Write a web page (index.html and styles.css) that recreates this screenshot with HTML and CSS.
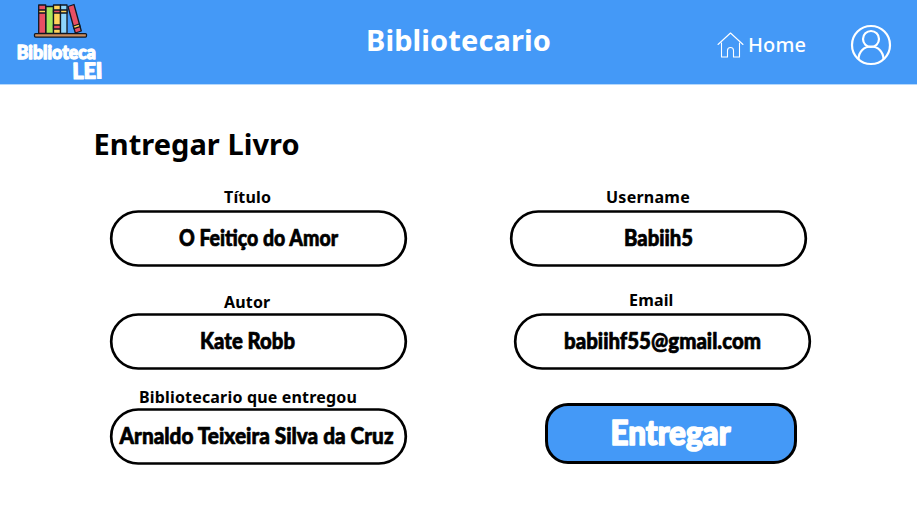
FILE: index.html
```html
<!DOCTYPE html>
<html lang="pt">
<head>
<meta charset="utf-8">
<title>Entregar Livro</title>
<link rel="stylesheet" href="styles.css">
</head>
<body>
<header class="topbar">
  <svg class="brand" viewBox="0 0 130 84" role="img" aria-label="Biblioteca LEI">
    <g stroke="#111722" stroke-width="1.3" stroke-linejoin="round">
      <rect x="38.7" y="5" width="7" height="28.5" fill="#e84f64"/>
      <path d="M38.7 10h7v3h-7z" fill="#ffd35b"/>
      <rect x="46" y="6.5" width="7.5" height="27" fill="#a5e65b"/>
      <rect x="53.5" y="5" width="7" height="28.5" fill="#ffd35b"/>
      <path d="M53.5 10h7v3h-7zM53.5 25h7v4h-7z" fill="#e84f64"/>
      <rect x="60.5" y="5" width="6.5" height="28.5" fill="#8ed5fb"/>
      <path d="M60.5 10h6.500v3h-6.500z" fill="#ffd35b"/>
      <path d="M68 6.500l6-2 7.300 26.500-6 2z" fill="#e84f64"/>
      <path d="M73.300 26l6-2 .7 2.700-6 2z" fill="#ffd35b"/>
      <rect x="34.500" y="33.600" width="52" height="3.500" rx="1" fill="#cc8d5b"/>
    </g>
    <text class="brand-word" x="16.800" y="58.700" font-size="19" textLength="79" lengthAdjust="spacingAndGlyphs">Biblioteca</text>
    <text class="brand-word" x="72.500" y="78.700" font-size="22" textLength="30" lengthAdjust="spacingAndGlyphs" transform="rotate(-1 87 78)">LEI</text>
  </svg>
  <h1 class="role">Bibliotecario</h1>
  <nav class="nav">
    <a class="home">
      <svg class="home-icon" viewBox="0 0 27 26"><path d="M1 12.500L13.500 1 26 12.500M4.500 11v14h6v-6.500q0-3 3-3t3 3V25h6V11"/></svg>
      <span class="home-label">Home</span>
    </a>
    <svg class="user-icon" viewBox="0 0 40 40"><circle cx="20" cy="20" r="19"/><circle cx="20" cy="14" r="8"/><path d="M7.500 34c.3-7.500 5.500-12.500 12.500-12.500S32.200 26.500 32.500 34"/></svg>
  </nav>
</header>
<main class="page">
  <h2 class="title">Entregar Livro</h2>
  <div class="columns">
    <section class="column">
      <div class="field">
        <span class="label titulo">Título</span>
        <svg class="pill" viewBox="0 0 297 57"><rect x="1.200" y="1.500" width="294.600" height="54" rx="27"/><text x="69" y="36" textLength="159" lengthAdjust="spacingAndGlyphs">O Feitiço do Amor</text></svg>
      </div>
      <div class="field autor-field">
        <span class="label autor">Autor</span>
        <svg class="pill" viewBox="0 0 297 57"><rect x="1.200" y="1.500" width="294.600" height="54" rx="27"/><text x="90" y="36" textLength="95" lengthAdjust="spacingAndGlyphs">Kate Robb</text></svg>
      </div>
      <div class="field clerk-field">
        <span class="label clerk">Bibliotecario que entregou</span>
        <svg class="pill" viewBox="0 0 297 57"><rect x="1.200" y="1.500" width="294.600" height="54" rx="27"/><text x="9.500" y="36" textLength="274" lengthAdjust="spacingAndGlyphs">Arnaldo Teixeira Silva da Cruz</text></svg>
      </div>
    </section>
    <section class="column">
      <div class="field">
        <span class="label username">Username</span>
        <svg class="pill" viewBox="0 0 297 57"><rect x="1.200" y="1.500" width="294.600" height="54" rx="27"/><text x="114" y="36" textLength="69" lengthAdjust="spacingAndGlyphs">Babiih5</text></svg>
      </div>
      <div class="field email-field">
        <span class="label email">Email</span>
        <svg class="pill" viewBox="0 0 297 57"><rect x="1.200" y="1.500" width="294.600" height="54" rx="27"/><text x="50" y="36" textLength="197" lengthAdjust="spacingAndGlyphs">babiihf55@gmail.com</text></svg>
      </div>
      <button class="submit"><svg class="submit-text" viewBox="0 0 246 55"><text x="62.500" y="38.500" textLength="120" lengthAdjust="spacingAndGlyphs">Entregar</text></svg></button>
    </section>
  </div>
</main>
</body>
</html>
```
FILE: styles.css
```css
* { box-sizing: border-box; }
body { margin: 0; width: 917px; height: 512px; overflow: hidden; background: #fff; color: #000; font-family: "Noto Sans", sans-serif; }
svg { display: block; overflow: visible; }
h1, h2 { margin: 0; font-weight: 700; white-space: nowrap; }
.topbar { display: flex; height: 85px; background: #4499f7; border-bottom: 1px solid #b5d8fc; color: #fff; }
.brand { width: 130px; height: 84px; flex: none; }
.brand-word { font-family: Lato, sans-serif; font-weight: 900; fill: #fff; stroke: #fff; stroke-width: 1.3; stroke-linejoin: round; }
.role { width: 350px; padding-left: 236px; flex: none; font-size: 29px; line-height: 40px; letter-spacing: .1px; margin-top: 20px; }
.nav { display: flex; align-items: flex-start; margin-left: 237px; }
.home { display: flex; }
.home-icon { width: 27px; height: 26px; margin-top: 32px; fill: none; stroke: #fff; stroke-width: 1.1; stroke-linejoin: round; stroke-linecap: round; }
.home-label { width: 57px; margin: 31px 0 0 4px; font-size: 20px; line-height: 28px; font-weight: 500; letter-spacing: .1px; }
.user-icon { width: 40px; height: 40px; margin: 24.5px 0 0 46px; flex: none; fill: none; stroke: #fff; stroke-width: 2.2; }
.page { padding: 39px 0 0; }
.title { padding-left: 93.5px; font-size: 29px; line-height: 40px; letter-spacing: .04px; }
.columns { display: flex; gap: 103px; padding: 22px 0 0 110px; }
.column { width: 297px; }
.label { display: block; height: 24px; font-size: 16px; line-height: 22px; font-weight: 700; letter-spacing: .17px; white-space: nowrap; }
.pill { width: 297px; height: 57px; }
.pill rect { fill: #fff; stroke: #000; stroke-width: 2.7; }
.pill text { font: 900 23.5px Lato, sans-serif; stroke: #000; stroke-width: .7; stroke-linejoin: round; }
.titulo { padding-left: 114px; }
.autor-field { margin-top: 24px; }
.autor { height: 22px; padding-left: 114px; }
.clerk-field { margin-top: 16px; }
.clerk { padding-left: 29px; height: 22px; }
.username { padding-left: 96px; letter-spacing: .25px; }
.email-field { margin: 22px 0 0 4px; }
.email { padding-left: 115px; }
.submit { display: block; width: 252px; height: 61px; margin: 33px 0 0 34.5px; padding: 0; border: 3px solid #000; border-radius: 23px; background: #4499f7; }
.submit-text { width: 246px; height: 55px; }
.submit-text text { font: 900 34px Lato, sans-serif; fill: #fff; stroke: #fff; stroke-width: 1.6; stroke-linejoin: round; }
```
